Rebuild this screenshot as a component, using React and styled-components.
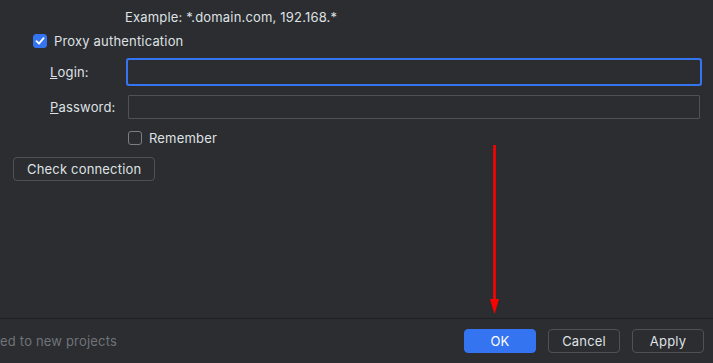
import React from "react";
import styled, { createGlobalStyle } from "styled-components";

const Global = createGlobalStyle`
  html, body { margin: 0; padding: 0; background: #2B2D30; }
  body { font-family: Inter, "Noto Sans", sans-serif; font-size: 13px; letter-spacing: 0.18px; color: #DFE1E5; overflow: hidden; }
  * { box-sizing: border-box; }
`;

const Page = styled.div`
  position: relative;
  height: 363px;
  width: 713px;
  display: flex;
  flex-direction: column;
  background: #2B2D30;
`;

const Content = styled.div`
  flex: 1;
  display: flex;
  flex-direction: column;
  align-items: flex-start;
  padding-top: 9px;
`;

const Hint = styled.div`
  margin-left: 125px;
  height: 16px;
  line-height: 16px;
`;

const CheckRow = styled.label`
  display: flex;
  align-items: center;
  gap: 7px;
  height: 16px;
  margin-top: ${(p) => p.$top}px;
  margin-left: ${(p) => p.$left}px;
  line-height: 16px;
`;

const Box = styled.span`
  width: 14px;
  height: 14px;
  border-radius: 3px;
  display: inline-flex;
  align-items: center;
  justify-content: center;
  background: ${(p) => (p.$checked ? "#3574F0" : "transparent")};
  border: 1px solid ${(p) => (p.$checked ? "#3574F0" : "#7A7E85")};
`;

const Form = styled.div`
  align-self: stretch;
  display: grid;
  grid-template-columns: 78px 1fr;
  row-gap: 11px;
  margin: 11px 13px 0 50px;
  align-items: center;
`;

const Label = styled.span`
  line-height: 16px;
`;

const Input = styled.div`
  height: 24px;
  border: 1px solid ${(p) => (p.$focused ? "#2B2D30" : "#4E5157")};
  box-shadow: ${(p) => (p.$focused ? "0 0 0 2px #3574F0" : "none")};
  border-radius: 1px;
  background: #2B2D30;
`;

const Button = styled.button`
  height: 24px;
  min-width: 72px;
  padding: 0 13px;
  border-radius: 4px;
  font-family: Inter, "Noto Sans", sans-serif;
  font-size: 13px;
  letter-spacing: 0.18px;
  line-height: 16px;
  color: ${(p) => (p.$primary ? "#FFFFFF" : "#DFE1E5")};
  background: ${(p) => (p.$primary ? "#3574F0" : "transparent")};
  border: 1px solid ${(p) => (p.$primary ? "#3574F0" : "#4E5157")};
  margin-top: ${(p) => p.$top || 0}px;
  margin-left: ${(p) => p.$left || 0}px;
`;

const Separator = styled.div`
  height: 1px;
  background: #1E1F22;
`;

const Footer = styled.div`
  height: 44px;
  display: flex;
  align-items: center;
  justify-content: space-between;
  padding: 0 9px 0 0;
`;

const Note = styled.div`
  width: 117px;
  overflow: hidden;
  display: flex;
  justify-content: flex-end;
  white-space: nowrap;
  color: #6F737A;
`;

const Buttons = styled.div`
  display: flex;
  gap: 12px;
`;

const Arrow = styled.svg`
  position: absolute;
  left: 488px;
  top: 144px;
`;

const Check = () => (
  <svg width="10" height="10" viewBox="0 0 10 10">
    <path d="M1.5 5.2 L4 7.6 L8.6 2.2" fill="none" stroke="#fff" strokeWidth="1.8" strokeLinecap="round" strokeLinejoin="round" />
  </svg>
);

export default function App() {
  return (
    <Page>
      <Global />
      <Content>
        <Hint>Example: *.domain.com, 192.168.*</Hint>
        <CheckRow $top={8} $left={33}>
          <Box $checked><Check /></Box>
          Proxy authentication
        </CheckRow>
        <Form>
          <Label><u>L</u>ogin:</Label>
          <Input $focused />
          <Label><u>P</u>assword:</Label>
          <Input />
        </Form>
        <CheckRow $top={11} $left={128}>
          <Box />
          Remember
        </CheckRow>
        <Button $top={11} $left={13}>Check connection</Button>
      </Content>
      <Separator />
      <Footer>
        <Note><span>Settings are applied to new projects</span></Note>
        <Buttons>
          <Button $primary>OK</Button>
          <Button>Cancel</Button>
          <Button>Apply</Button>
        </Buttons>
      </Footer>
      <Arrow width="14" height="172" viewBox="0 0 14 172">
        <line x1="6.5" y1="1" x2="6.5" y2="158" stroke="#FF0000" strokeWidth="2.6" />
        <path d="M2 155 L11 155 L6.5 170 Z" fill="#FF0000" />
      </Arrow>
    </Page>
  );
}
